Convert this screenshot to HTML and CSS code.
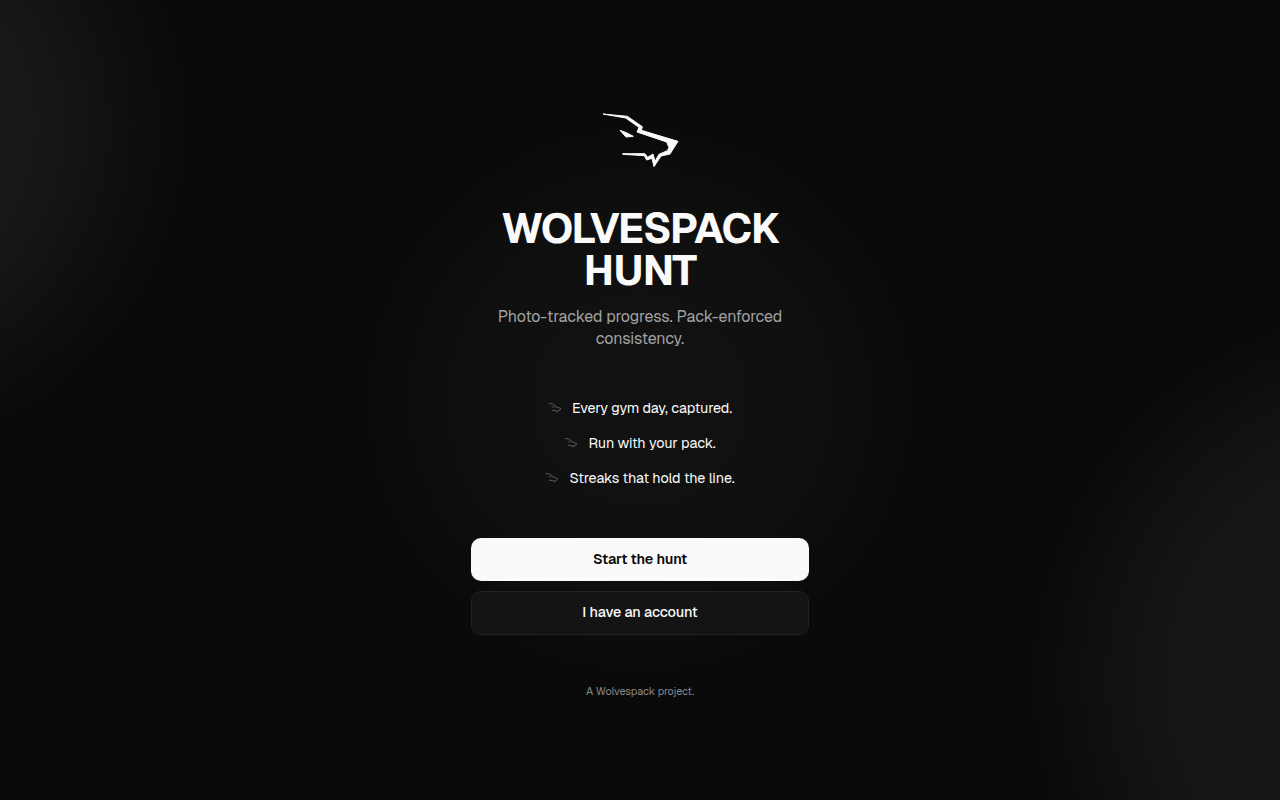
FILE: index.html
```
<!DOCTYPE html>
<html lang="en">
<head>
    <meta charset="UTF-8">
    <meta name="viewport" content="width=device-width, initial-scale=1.0">
    <title>Wolvespack Hunt</title>
    <link rel="stylesheet" href="styles.css">
</head>
<body>
    <svg class="sprite" aria-hidden="true">
        <symbol id="wolf" viewBox="30 33 240 174">
            <path d="M39 42L112 49L157 80L154 91L264 124L240 162L213 168L192 200L186 175L170 180L163 167L98 163L98 161L165 161L173 172L189 162L195 184L207 163L232 152L237 143L230 126L141 96L147 82L107 54Z"/>
            <path d="M90 91L109 98L130 109L108 111Z"/>
        </symbol>
        <symbol id="wolf-line" viewBox="30 33 240 174">
            <path d="M38 41L110 52L152 81L148 93L248 126L236 157L210 165L192 192L187 169L171 176L164 164L97 161M92 92L128 109" fill="none" stroke="currentColor" stroke-width="10"/>
        </symbol>
    </svg>

    <main class="hero">
        <svg class="logo"><use href="#wolf"/></svg>

        <h1 class="title">WOLVESPACK HUNT</h1>
        <p class="subtitle">Photo-tracked progress. Pack-enforced consistency.</p>

        <ul class="features">
            <li><svg class="mark"><use href="#wolf-line"/></svg>Every gym day, captured.</li>
            <li><svg class="mark"><use href="#wolf-line"/></svg>Run with your pack.</li>
            <li><svg class="mark"><use href="#wolf-line"/></svg>Streaks that hold the line.</li>
        </ul>

        <div class="actions">
            <a href="#" class="btn btn-primary">Start the hunt</a>
            <a href="#" class="btn btn-secondary">I have an account</a>
        </div>

        <p class="footnote">A Wolvespack project.</p>
    </main>
</body>
</html>
```
FILE: styles.css
```
* {
    margin: 0;
    padding: 0;
    box-sizing: border-box;
}

body {
    font-family: 'Geist', 'Inter', sans-serif;
    min-height: 100vh;
    color: #fafafa;
    letter-spacing: -0.01em;
    background:
        radial-gradient(circle at -144px 125px, #181818 165px, #141414 218px, #0f0f0f 268px, rgba(10, 10, 10, 0) 330px),
        radial-gradient(circle at 1408px 680px, #161616 225px, #111111 295px, rgba(10, 10, 10, 0) 374px),
        radial-gradient(circle at 640px 400px, #111111 80px, #0f0f0f 180px, rgba(10, 10, 10, 0) 272px),
        #0a0a0a;
    overflow: hidden;
}

.sprite {
    display: none;
}

.hero {
    width: 338px;
    margin: 0 auto;
    padding-top: 111px;
    display: flex;
    flex-direction: column;
    align-items: center;
    text-align: center;
}

.logo {
    width: 80px;
    height: 58px;
    fill: #fafafa;
    stroke: #fafafa;
    stroke-width: 3px;
}

.title {
    margin-top: 38px;
    font-size: 42px;
    font-weight: 700;
    line-height: 42px;
    letter-spacing: -0.025em;
}

.subtitle {
    margin-top: 15px;
    font-size: 16px;
    line-height: 22px;
    letter-spacing: -0.1px;
    color: #a1a1a1;
}

.features {
    margin-top: 47px;
    list-style: none;
    display: flex;
    flex-direction: column;
    align-items: center;
    gap: 13px;
}

.features li {
    display: flex;
    align-items: center;
    gap: 10px;
    font-size: 14.4px;
    line-height: 22px;
    letter-spacing: -0.01em;
}

.mark {
    width: 14px;
    height: 10px;
    color: #8a8a8a;
}

.actions {
    width: 100%;
    margin-top: 49px;
    display: flex;
    flex-direction: column;
    gap: 10px;
}

.btn {
    height: 42.5px;
    display: flex;
    align-items: center;
    justify-content: center;
    border-radius: 10px;
    font-size: 14.4px;
    font-weight: 600;
    letter-spacing: -0.01em;
    text-decoration: none;
}

.btn-primary {
    background: #fafafa;
    color: #0a0a0a;
}

.btn-secondary {
    height: 44px;
    padding-bottom: 1px;
    background: #141414;
    border: 1px solid #222;
    color: #fafafa;
    font-weight: 500;
}

.footnote {
    margin-top: 48px;
    font-size: 10.88px;
    line-height: 16px;
    letter-spacing: -0.01em;
    color: #858585;
}
```
